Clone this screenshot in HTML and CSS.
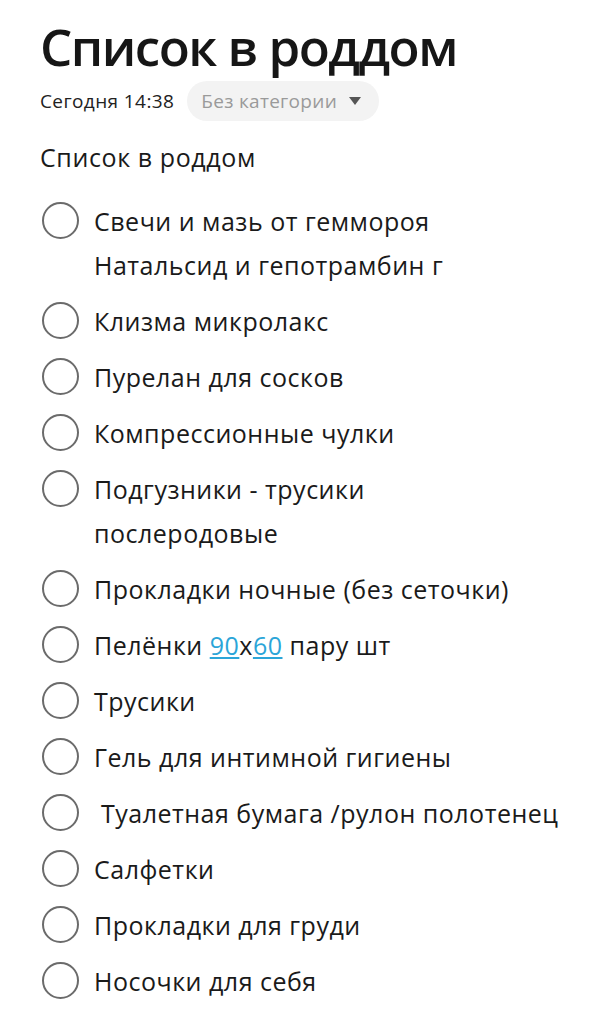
FILE: index.html
```html
<!DOCTYPE html>
<html lang="ru">

<head>
    <meta charset="UTF-8">
    <meta name="viewport" content="width=device-width, initial-scale=1.0">
    <title>Список в роддом</title>
    <link rel="stylesheet" href="styles.css">
</head>

<body>
    <div class="note">
        <h1 class="title">Список в роддом</h1>
        <div class="meta">
            <span class="date">Сегодня 14:38</span>
            <span class="category">Без категории <span class="caret"></span></span>
        </div>

        <p class="subtitle">Список в роддом</p>

        <ul class="checklist">
            <li class="item"><span class="check"></span><span class="label">Свечи и мазь от геммороя<br>Натальсид и гепотрамбин г</span></li>
            <li class="item"><span class="check"></span><span class="label">Клизма микролакс</span></li>
            <li class="item"><span class="check"></span><span class="label">Пурелан для сосков</span></li>
            <li class="item"><span class="check"></span><span class="label">Компрессионные чулки</span></li>
            <li class="item"><span class="check"></span><span class="label">Подгузники - трусики<br>послеродовые</span></li>
            <li class="item"><span class="check"></span><span class="label">Прокладки ночные (без сеточки)</span></li>
            <li class="item"><span class="check"></span><span class="label">Пелёнки <a href="#">90</a>х<a href="#">60</a> пару шт</span></li>
            <li class="item"><span class="check"></span><span class="label">Трусики</span></li>
            <li class="item"><span class="check"></span><span class="label">Гель для интимной гигиены</span></li>
            <li class="item"><span class="check"></span><span class="label">&nbsp;Туалетная бумага /рулон полотенец</span></li>
            <li class="item"><span class="check"></span><span class="label">Салфетки</span></li>
            <li class="item"><span class="check"></span><span class="label">Прокладки для груди</span></li>
            <li class="item"><span class="check"></span><span class="label">Носочки для себя</span></li>
        </ul>
    </div>
</body>

</html>
```

FILE: styles.css
```css
* {
    box-sizing: border-box;
    margin: 0;
    padding: 0;
}

body {
    background-color: #ffffff;
    color: #1a1a1a;
    font-family: "Open Sans", "Noto Sans", sans-serif;
    overflow: hidden;
}

.note {
    padding: 14px 0 0 40px;
}

.title {
    font-size: 51px;
    font-weight: 600;
    line-height: 64px;
    color: #161616;
    letter-spacing: -1.5px;
}

.meta {
    display: flex;
    align-items: center;
    gap: 13px;
    margin-top: 3px;
}

.date {
    font-size: 19px;
    letter-spacing: 0.4px;
    color: #222;
}

.category {
    display: flex;
    align-items: center;
    gap: 12px;
    height: 40px;
    padding: 0 18px 0 14px;
    border-radius: 20px;
    background-color: #f3f3f3;
    color: #9a9a9a;
    font-size: 19px;
    letter-spacing: 0.3px;
}

.caret {
    width: 0;
    height: 0;
    border-left: 6px solid transparent;
    border-right: 6px solid transparent;
    border-top: 8px solid #555;
}

.subtitle {
    font-size: 25px;
    letter-spacing: 0.6px;
    line-height: 36px;
    margin-top: 18px;
    color: #1a1a1a;
}

.checklist {
    list-style: none;
    margin-top: 18px;
}

.item {
    display: flex;
    align-items: flex-start;
    gap: 15px;
    padding: 6px 0;
}

.check {
    flex: none;
    width: 37px;
    height: 37px;
    margin: 3px 0 0 2px;
    border: 2.5px solid #6b6b6b;
    border-radius: 50%;
}

.label {
    font-size: 25px;
    letter-spacing: 0.5px;
    line-height: 44px;
    white-space: nowrap;
    color: #1a1a1a;
}

.label a {
    color: #2ba5d8;
    text-decoration: underline;
}
```
